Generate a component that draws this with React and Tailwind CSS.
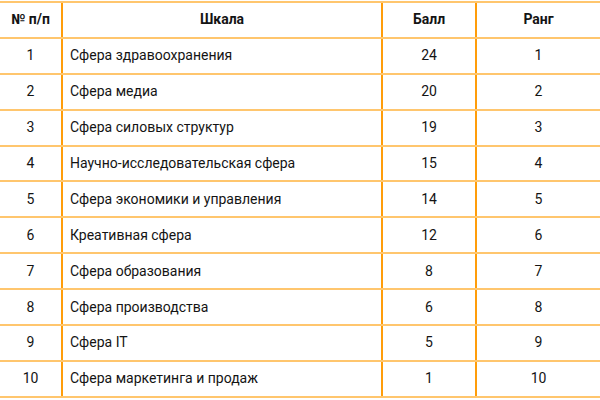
import React from 'react';

const rows = [
  [1, 'Сфера здравоохранения', 24, 1],
  [2, 'Сфера медиа', 20, 2],
  [3, 'Сфера силовых структур', 19, 3],
  [4, 'Научно-исследовательская сфера', 15, 4],
  [5, 'Сфера экономики и управления', 14, 5],
  [6, 'Креативная сфера', 12, 6],
  [7, 'Сфера образования', 8, 7],
  [8, 'Сфера производства', 6, 8],
  [9, 'Сфера IT', 5, 9],
  [10, 'Сфера маркетинга и продаж', 1, 10],
];

const Row = ({ cells, head }) => (
  <div
    className={`grid grid-cols-[61px_320px_94px_125px] h-[35.9px] border-b-2 border-[#ffc66e] ${
      head ? 'font-bold' : ''
    }`}
  >
    <div className="flex items-center justify-center">{cells[0]}</div>
    <div
      className={`flex items-center border-l-2 border-[#ff9d0a] ${
        head ? 'justify-center' : 'pl-[7px]'
      }`}
    >
      {cells[1]}
    </div>
    <div className="flex items-center justify-center border-l-2 border-[#ff9d0a]">{cells[2]}</div>
    <div className="flex items-center justify-center border-l-2 border-[#ff9d0a]">{cells[3]}</div>
  </div>
);

export default function App() {
  return (
    <div className="w-[600px] h-[400px] bg-white pt-px text-[14px] text-[#141414] font-['Roboto',sans-serif]">
      <div className="border-t-2 border-[#ffc66e]">
        <Row head cells={['№ п/п', 'Шкала', 'Балл', 'Ранг']} />
        {rows.map((r, i) => (
          <Row key={i} cells={r} />
        ))}
      </div>
    </div>
  );
}
